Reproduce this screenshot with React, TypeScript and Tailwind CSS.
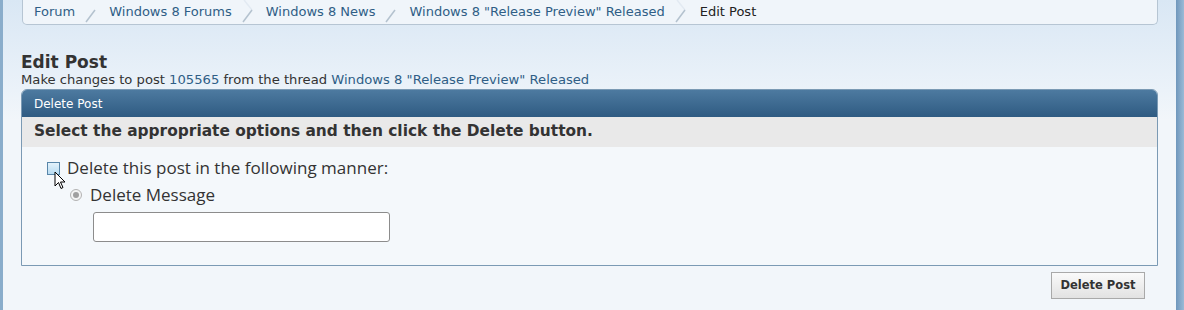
import React from "react";

const crumbs = ["Forum", "Windows 8 Forums", "Windows 8 News", 'Windows 8 "Release Preview" Released'];

const Sep = ({ full }: { full: boolean }) => (
  <svg width="14" height="24" viewBox="0 0 14 24" className="shrink-0">
    {full && <path d="M2 0 L10 10" stroke="#e2eaf2" strokeWidth="1.5" fill="none" />}
    <path d="M10 10 L1 22" stroke="#b4c2cf" strokeWidth="1.5" fill="none" />
  </svg>
);

const Cursor = () => (
  <svg width="13" height="20" viewBox="0 0 13 20" className="absolute left-[54px] top-[171px]">
    <path
      d="M1 1 L1 15 L4.5 11.5 L7 17.5 L9 16.5 L6.5 11 L11 11 Z"
      fill="#fff"
      stroke="#000"
      strokeWidth="1"
      strokeLinejoin="miter"
    />
  </svg>
);

export default function App() {
  return (
    <div
      className="relative w-[1184px] h-[310px] overflow-hidden flex text-[#333]"
      style={{ fontFamily: '"DejaVu Sans", Verdana, sans-serif' }}
    >
      <div className="w-[3px] bg-[#8aadcb]" />
      <div className="flex-1 bg-[linear-gradient(to_bottom,#d9e7f4_0px,#ebf2f9_90px,#f2f6fa_120px)] pl-[18px] pr-[18px]">
        {/* breadcrumb */}
        <div className="h-[25px] ml-[1px] flex items-stretch bg-[#f0f5fa] border border-t-0 border-[#b6c5d3] rounded-b-[5px] pl-[11px] text-[13px]">
          {crumbs.map((c, i) => (
            <React.Fragment key={c}>
              <span className="flex items-center text-[#2f5e86] whitespace-nowrap">{c}</span>
              <span className="flex items-center px-[10px]">
                <Sep full={i === 1 || i === 3} />
              </span>
            </React.Fragment>
          ))}
          <span className="flex items-center text-[#222] whitespace-nowrap ml-[1px]">Edit Post</span>
        </div>

        {/* title */}
        <h1 className="mt-[27px] text-[17px] font-bold leading-[20px] text-[#333]">Edit Post</h1>
        <p className="text-[13.15px] leading-[16px] text-[#333]">
          Make changes to post <span className="text-[#2f5e86]">105565</span> from the thread{" "}
          <span className="text-[#2f5e86]">Windows 8 "Release Preview" Released</span>
        </p>

        {/* panel */}
        <div className="mt-[1px] border border-[#7b9ab4] rounded-t-[6px] bg-[#f4f8fb] overflow-hidden">
          <div className="h-[27px] bg-[linear-gradient(to_bottom,#4d7aa0,#2f5b82)] flex items-center pl-[12px] text-white text-[12px]">
            Delete Post
          </div>
          <div className="h-[30px] bg-[#e9e9e9] flex items-center pl-[12px] text-[15.4px] font-bold text-[#333]">
            Select the appropriate options and then click the Delete button.
          </div>
          <div className="h-[118px] pl-[25px] pt-[11px]" style={{ fontFamily: '"Open Sans", "Noto Sans", sans-serif' }}>
            <div className="flex items-center h-[20px]">
              <span className="w-[13px] h-[13px] border border-[#5886a9] bg-[linear-gradient(to_bottom,#e3f2fb,#b8dcf2)] mr-[7px]" />
              <span className="text-[17px] text-[#333]">Delete this post in the following manner:</span>
            </div>
            <div className="flex items-center h-[20px] mt-[7px] pl-[23px]">
              <span className="w-[12px] h-[12px] rounded-full border border-[#b3b3b3] bg-[#f4f4f4] flex items-center justify-center mr-[8px]">
                <span className="w-[6px] h-[6px] rounded-full bg-[#a0a0a0]" />
              </span>
              <span className="text-[17px] text-[#333]">Delete Message</span>
            </div>
            <div className="mt-[7px] ml-[46px] w-[297px] h-[30px] border border-[#8c8c8c] rounded-[3px] bg-white" />
          </div>
        </div>

        <div className="flex justify-end mt-[6px] pr-[13px]">
          <button className="h-[27px] w-[94px] border border-[#a9a9a9] bg-[linear-gradient(to_bottom,#fafafa,#e2e2e2)] text-[11.5px] font-bold text-[#333]">
            Delete Post
          </button>
        </div>
      </div>
      <div className="w-[8px] bg-[linear-gradient(to_right,#6f97bc,#9bbad6)]" />
      <Cursor />
    </div>
  );
}
